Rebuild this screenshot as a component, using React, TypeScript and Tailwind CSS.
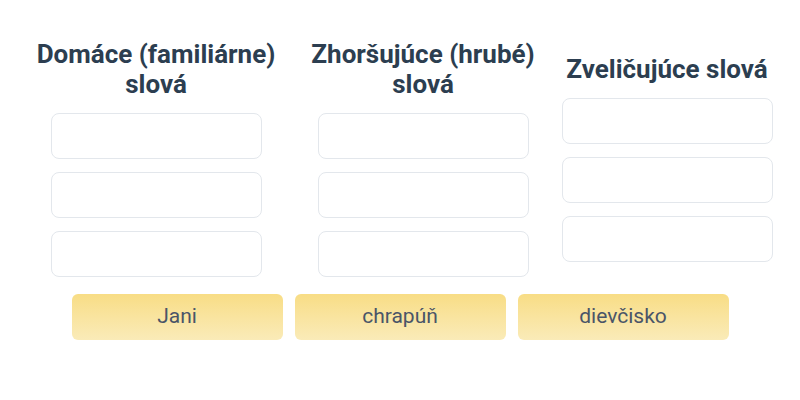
const columns = [
  { title: 'Domáce (familiárne) slová', width: 'w-[238px]' },
  { title: 'Zhoršujúce (hrubé) slová', width: 'w-[222px]' },
  { title: 'Zveličujúce slová', width: 'w-[212px]' },
];

const words = ['Jani', 'chrapúň', 'dievčisko'];

function DropBox() {
  return <div className="h-[46px] w-[211px] rounded-lg border border-[#e3e7ec] bg-white" />;
}

export default function App() {
  return (
    <div
      className="h-[400px] w-[800px] bg-white"
      style={{ fontFamily: 'Roboto, "Liberation Sans", sans-serif' }}
    >
      <div className="flex items-center pl-[37px] pt-[39px]">
        {columns.map((col, i) => (
          <div
            key={col.title}
            className={`${col.width} flex flex-col items-center ${i === 1 ? 'ml-[37px]' : ''} ${i === 2 ? 'ml-[27px]' : ''}`}
          >
            <h2 className="mb-[14px] whitespace-nowrap text-center text-[26px] font-bold leading-[30px] text-[#2c3e50]">
              {col.title.includes('(') ? (
                <>
                  {col.title.slice(0, col.title.lastIndexOf(' '))}
                  <br />
                  {col.title.slice(col.title.lastIndexOf(' ') + 1)}
                </>
              ) : (
                col.title
              )}
            </h2>
            <div className="flex flex-col gap-[13px]">
              <DropBox />
              <DropBox />
              <DropBox />
            </div>
          </div>
        ))}
      </div>
      <div className="mt-[17px] flex justify-center gap-[12px]">
        {words.map((w) => (
          <div
            key={w}
            className="flex h-[46px] w-[211px] items-center justify-center rounded-md bg-gradient-to-b from-[#f8dd85] to-[#faebb8] text-[21px] text-[#4a5568]"
          >
            {w}
          </div>
        ))}
      </div>
    </div>
  );
}
